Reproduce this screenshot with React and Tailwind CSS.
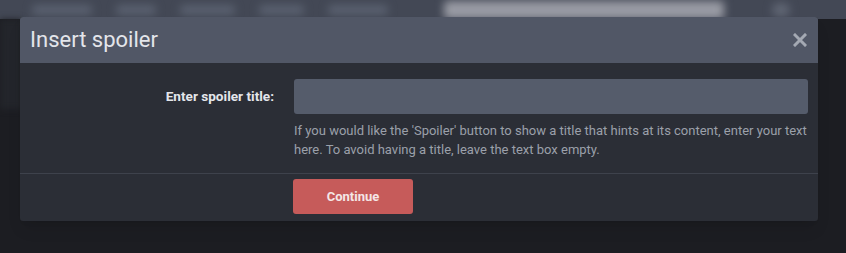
export default function App() {
  return (
    <div
      className="relative w-[846px] h-[253px] overflow-hidden bg-[#1c1d22]"
      style={{ fontFamily: "Roboto, 'Noto Sans', sans-serif" }}
    >
      {/* blurred page behind the overlay */}
      <div className="absolute inset-x-0 top-0 h-[19px] bg-[#434855]">
        <div className="flex items-center gap-6 h-full pl-8 blur-[4px]">
          <div className="w-[60px] h-[10px] rounded bg-[#5a6170]" />
          <div className="w-[40px] h-[10px] rounded bg-[#5a6170]" />
          <div className="w-[55px] h-[10px] rounded bg-[#5a6170]" />
          <div className="w-[45px] h-[10px] rounded bg-[#5a6170]" />
          <div className="w-[60px] h-[10px] rounded bg-[#5a6170]" />
          <div className="w-[280px] h-[18px] ml-8 rounded bg-[#999ba4]" />
          <div className="w-[18px] h-[14px] ml-6 rounded-full bg-[#5f6573]" />
        </div>
      </div>
      <div className="absolute left-0 top-[19px] w-[22px] h-[90px] bg-[#23252b] blur-[3px]" />

      {/* dialog */}
      <div className="absolute left-[20px] top-[17px] w-[798px] rounded-[3px] overflow-hidden bg-[#2b2e36] shadow-lg">
        <div className="flex items-center justify-between h-[46px] pl-[10px] pr-[11px] bg-[#515766]">
          <h2 className="text-[22px] leading-none text-[#e3e5ea] font-normal">Insert spoiler</h2>
          <svg width="14" height="14" viewBox="0 0 14 14" className="mt-[-1px]">
            <path d="M2 2 L12 12 M12 2 L2 12" stroke="#a4a9b3" strokeWidth="3" strokeLinecap="square" />
          </svg>
        </div>

        <div className="grid grid-cols-[254px_1fr] gap-x-[20px] pt-[16px] pb-[14px] pr-[10px]">
          <label className="flex items-center justify-end h-[35px] text-[13.6px] font-bold text-[#e4e6eb]">
            Enter spoiler title:
          </label>
          <div>
            <input
              type="text"
              className="block w-full h-[35px] rounded-[3px] bg-[#555c6b] px-2 text-[13px] text-white outline-none"
            />
            <p className="mt-[7px] text-[13px] leading-[19px] text-[#9ba0aa]">
              If you would like the 'Spoiler' button to show a title that hints at its content, enter your text
              here. To avoid having a title, leave the text box empty.
            </p>
          </div>
        </div>

        <div className="border-t border-[#3e424c] grid grid-cols-[254px_1fr] gap-x-[19px] pt-[5px] pb-[7px]">
          <div />
          <div>
            <button className="w-[120px] h-[35px] rounded-[3px] bg-[#c65b5a] text-[13px] font-bold text-[#f4e6e6]">
              Continue
            </button>
          </div>
        </div>
      </div>
    </div>
  );
}
